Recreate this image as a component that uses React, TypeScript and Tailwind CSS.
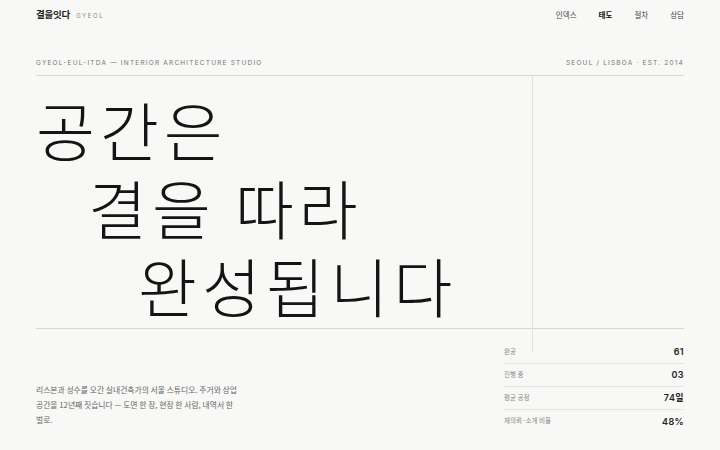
import React from 'react';

const stats = [
  { label: '완공', value: '61' },
  { label: '진행 중', value: '03' },
  { label: '평균 공정', value: '74일' },
  { label: '재의뢰·소개 비율', value: '48%' },
];

const nav = ['인덱스', '태도', '절차', '상담'];

export default function App() {
  return (
    <div
      className="relative h-[450px] w-[720px] overflow-hidden bg-[#f8f8f6] px-[36px] text-[#1a1a1a]"
      style={{ fontFamily: 'Inter, "Noto Sans CJK KR", sans-serif' }}
    >
      {/* header */}
      <header className="flex h-[31px] items-center justify-between">
        <div className="flex items-baseline gap-[6px]">
          <span className="text-[9.5px] font-bold tracking-[-0.2px] text-[#222]">결을잇다</span>
          <span className="text-[6px] tracking-[1.6px] text-[#888]">GYEOL</span>
        </div>
        <nav className="flex items-center gap-[22px] text-[7.5px] text-[#444]">
          {nav.map((n) => (
            <span key={n} className={n === '태도' ? 'font-semibold text-[#111]' : ''}>
              {n}
            </span>
          ))}
        </nav>
      </header>

      {/* subtitle row */}
      <div className="mt-[28px] flex items-center justify-between text-[6.5px] tracking-[1.2px] text-[#777]">
        <span>GYEOL-EUL-ITDA — INTERIOR ARCHITECTURE STUDIO</span>
        <span>SEOUL / LISBOA · EST. 2014</span>
      </div>

      {/* hero */}
      <section className="relative mt-[6px] h-[254px] border-y border-[#d6d6d2]">
        <div className="pointer-events-none absolute left-[496px] top-0 h-[276px] w-px bg-[#e2e2de]" />
        <h1
          className="pt-[13px] text-[64px] font-light leading-[78px] tracking-[5px] text-[#141414]"
          style={{ fontFamily: '"Noto Sans CJK KR", sans-serif' }}
        >
          <span className="block">공간은</span>
          <span className="block pl-[52px]">결을 따라</span>
          <span className="block pl-[102px]">완성됩니다</span>
        </h1>
      </section>

      {/* bottom */}
      <section className="flex justify-between">
        <p
          className="mt-[53px] w-[214px] break-keep text-[7.8px] leading-[15px] text-[#666]"
          style={{ fontFamily: '"Noto Sans CJK KR", sans-serif' }}
        >
          리스본과 성수를 오간 실내건축가의 서울 스튜디오. 주거와 상업 공간을 12년째 짓습니다 — 도면 한 장, 현장 한 사람, 내역서 한 벌로.
        </p>
        <div className="mt-[12px] w-[180px]">
          {stats.map((s, i) => (
            <div
              key={s.label}
              className={`flex h-[23px] items-center justify-between ${i < stats.length - 1 ? 'border-b border-[#e4e4e0]' : ''}`}
            >
              <span
                className="text-[6.5px] text-[#888]"
                style={{ fontFamily: '"Noto Sans CJK KR", sans-serif' }}
              >
                {s.label}
              </span>
              <span className="text-[9px] font-semibold tracking-[0.4px] text-[#222]">{s.value}</span>
            </div>
          ))}
        </div>
      </section>
    </div>
  );
}
